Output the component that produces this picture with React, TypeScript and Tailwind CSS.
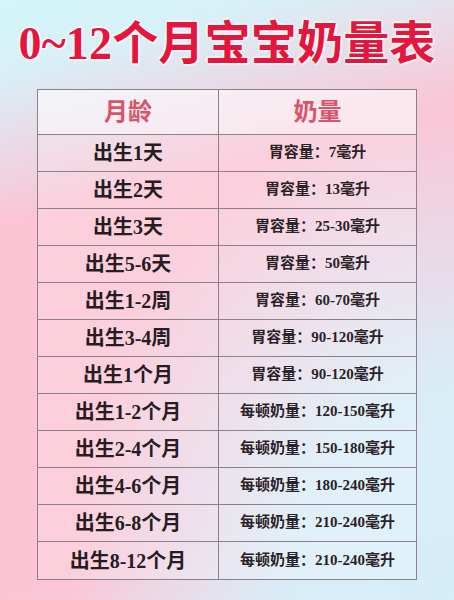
const rows: [string, string][] = [
  ["出生1天", "胃容量：7毫升"],
  ["出生2天", "胃容量：13毫升"],
  ["出生3天", "胃容量：25-30毫升"],
  ["出生5-6天", "胃容量：50毫升"],
  ["出生1-2周", "胃容量：60-70毫升"],
  ["出生3-4周", "胃容量：90-120毫升"],
  ["出生1个月", "胃容量：90-120毫升"],
  ["出生1-2个月", "每顿奶量：120-150毫升"],
  ["出生2-4个月", "每顿奶量：150-180毫升"],
  ["出生4-6个月", "每顿奶量：180-240毫升"],
  ["出生6-8个月", "每顿奶量：210-240毫升"],
  ["出生8-12个月", "每顿奶量：210-240毫升"],
];

const font = "font-['Liberation_Serif','Noto_Sans_CJK_SC',serif]";

export default function App() {
  return (
    <div
      className={`w-[454px] h-[600px] overflow-hidden flex flex-col items-center ${font} bg-[radial-gradient(ellipse_at_100%_100%,#d6eef8_0%,#d9edf7_25%,rgba(220,236,247,0)_60%),linear-gradient(165deg,#d2f6fb_0%,#d8f0f7_10%,#fcc3d4_32%,#fcc3d4_82%,#f2d8e6_100%)]`}
    >
      {/* title */}
      <div className="h-[89px] flex items-center justify-center pb-[2px]">
        <h1 className="text-[46px] leading-none font-bold text-[#e5163d] tracking-[0.2px] [text-shadow:0_0_2px_#fff,0_0_3px_#fff,1px_1px_2px_#fff,-1px_-1px_2px_#fff]">
          0~12个月宝宝奶量表
        </h1>
      </div>

      {/* table */}
      <div className="w-[380px] border border-[#8d8189] bg-white/20">
        <div className="flex h-[45px] border-b border-[#8d8189] bg-white/45">
          <div className="w-[181px] border-r border-[#8d8189] flex items-center justify-center text-[24px] font-bold text-[#d9546b]">
            月龄
          </div>
          <div className="flex-1 flex items-center justify-center text-[24px] font-bold text-[#d9546b]">
            奶量
          </div>
        </div>
        {rows.map(([age, amount], i) => (
          <div
            key={i}
            className={`flex h-[37px] ${i < rows.length - 1 ? "border-b border-[#8d8189]" : ""}`}
          >
            <div className="w-[181px] border-r border-[#8d8189] flex items-center justify-center text-[20px] font-bold text-[#261d22]">
              {age}
            </div>
            <div className="flex-1 flex items-center justify-center text-[15px] font-bold text-[#2b2228] pb-[1px]">
              {amount}
            </div>
          </div>
        ))}
      </div>
    </div>
  );
}
